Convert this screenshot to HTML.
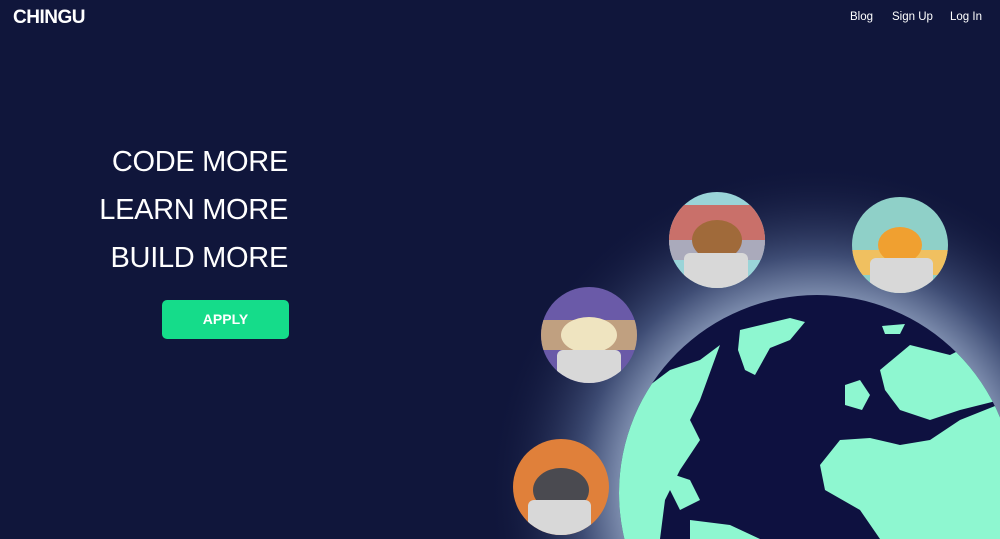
<!DOCTYPE html>
<html><head><style>
*{margin:0;padding:0;box-sizing:border-box}
html,body{width:1000px;height:539px;overflow:hidden}
body{background:#10163b;font-family:"Liberation Sans",sans-serif;position:relative;color:#fff}
.logo{position:absolute;left:13px;top:7px;font-size:19px;font-weight:bold;letter-spacing:-0.5px}
.nav{position:absolute;top:11px;font-size:11.5px}
.h{position:absolute;right:712px;font-size:29px;text-align:right;white-space:nowrap;letter-spacing:-0.3px}
.btn{position:absolute;left:162px;top:300px;width:127px;height:39px;background:#15dc8a;border-radius:5px;font-weight:bold;font-size:14px;text-align:center;line-height:39px}
svg{position:absolute;left:0;top:0;display:block}
</style></head><body>
<svg width="1000" height="539">
<defs>
<radialGradient id="g" cx="817" cy="493" r="330" gradientUnits="userSpaceOnUse">
<stop offset="0.58" stop-color="#8494b4"/><stop offset="0.72" stop-color="#3e4c74"/><stop offset="1" stop-color="#10163b" stop-opacity="0"/>
</radialGradient>
<clipPath id="c"><circle cx="817" cy="493" r="198"/></clipPath>
<clipPath id="a1"><circle cx="717" cy="240" r="48"/></clipPath>
<clipPath id="a2"><circle cx="900" cy="245" r="48"/></clipPath>
<clipPath id="a3"><circle cx="589" cy="335" r="48"/></clipPath>
<clipPath id="a4"><circle cx="561" cy="487" r="48"/></clipPath>
</defs>
<circle cx="817" cy="493" r="330" fill="url(#g)"/>
<circle cx="817" cy="493" r="198" fill="#0e1140"/>
<g clip-path="url(#c)" fill="#8ef7d0">
<path d="M620 400 L650 385 L670 370 L700 360 L720 345 L700 400 L690 420 L700 440 L680 470 L665 500 L660 539 L600 539 Z"/>
<path d="M660 470 L690 480 L700 500 L680 510 Z"/>
<path d="M740 330 L790 318 L805 322 L790 340 L770 348 L755 375 L745 370 L738 350 Z"/>
<path d="M690 520 L730 525 L760 539 L690 539 Z"/>
<path d="M820 465 L840 440 L870 438 L900 445 L930 440 L960 420 L1010 400 L1020 539 L880 539 L860 510 L825 490 Z"/>
<path d="M845 385 L860 380 L870 395 L862 410 L845 405 Z"/>
<path d="M882 326 L905 324 L900 334 L885 334 Z"/>
<path d="M880 370 L910 345 L950 355 L970 345 L1000 360 L1000 400 L960 410 L930 420 L900 410 L885 390 Z"/>
</g>
<g clip-path="url(#a1)"><rect x="660" y="190" width="120" height="100" fill="#9ad4d8"/><rect x="669" y="205" width="96" height="40" fill="#c9706a"/><rect x="669" y="240" width="96" height="20" fill="#aab"/><ellipse cx="717" cy="240" rx="25" ry="20" fill="#a06a3a"/><rect x="684" y="253" width="64" height="40" rx="6" fill="#d8d8d8"/></g>
<g clip-path="url(#a2)"><rect x="850" y="195" width="100" height="100" fill="#8fd0c8"/><rect x="850" y="250" width="100" height="25" fill="#f0c060"/><ellipse cx="900" cy="245" rx="22" ry="18" fill="#f0a030"/><rect x="870" y="258" width="63" height="40" rx="6" fill="#d8d8d8"/></g>
<g clip-path="url(#a3)"><rect x="540" y="285" width="100" height="100" fill="#6a5aa8"/><rect x="540" y="320" width="100" height="30" fill="#c0a080"/><ellipse cx="589" cy="335" rx="28" ry="18" fill="#efe4c0"/><rect x="557" y="350" width="64" height="40" rx="6" fill="#d8d8d8"/></g>
<g clip-path="url(#a4)"><rect x="510" y="437" width="100" height="102" fill="#e0803a"/><ellipse cx="561" cy="490" rx="28" ry="22" fill="#4a4a50"/><rect x="528" y="500" width="63" height="45" rx="6" fill="#d8d8d8"/></g>
</svg>
<div class="logo">CHINGU</div>
<div class="nav" style="left:850px">Blog</div>
<div class="nav" style="left:892px">Sign Up</div>
<div class="nav" style="left:950px">Log In</div>
<div class="h" style="top:146px">CODE MORE</div>
<div class="h" style="top:194px">LEARN MORE</div>
<div class="h" style="top:242px">BUILD MORE</div>
<div class="btn">APPLY</div>
</body></html>
